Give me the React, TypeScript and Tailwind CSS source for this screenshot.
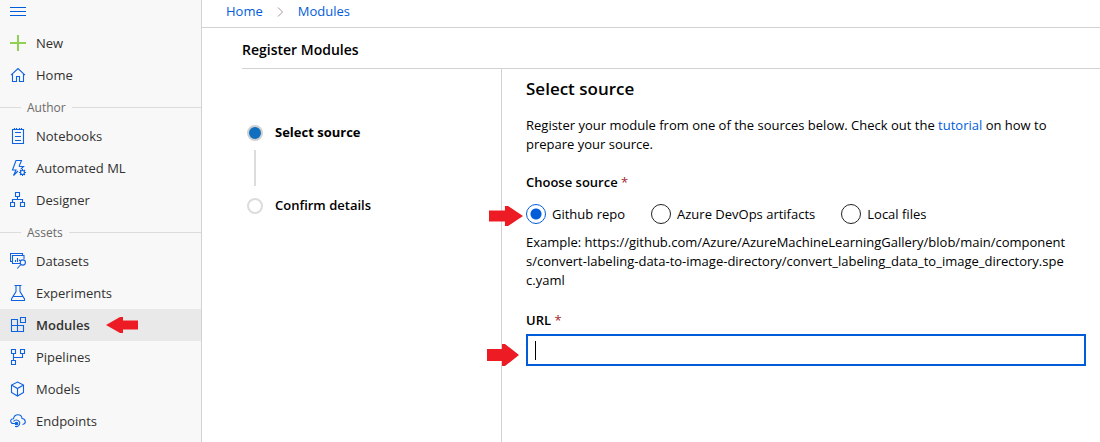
import type { ReactNode } from "react";

type NavItem = { label: string; icon: ReactNode; active?: boolean };

function Icon({ children, color = "#0f62e0" }: { children: ReactNode; color?: string }) {
  return (
    <svg className="size-4 shrink-0" viewBox="0 0 16 16" fill="none" stroke={color} strokeWidth="1.1" aria-hidden="true">
      {children}
    </svg>
  );
}

const topItems: NavItem[] = [
  {
    label: "New",
    icon: (
      <Icon color="#8fd055">
        <path d="M8 0v16M0 8h16" strokeWidth="2" />
      </Icon>
    ),
  },
  {
    label: "Home",
    icon: (
      <Icon>
        <path d="M1 8.200 8 1.500l7 6.700M2.500 7v7.500h4v-5h3v5h4V7" />
      </Icon>
    ),
  },
];

const authorItems: NavItem[] = [
  {
    label: "Notebooks",
    icon: (
      <Icon>
        <path d="M2.500 1.500h11v14h-11zM5 4.500h6M5 8.500h6M5 12.500h6M4.500 0v1.500M6.500 0v1.500M9.500 0v1.500M11.500 0v1.500" />
      </Icon>
    ),
  },
  {
    label: "Automated ML",
    icon: (
      <Icon>
        <path d="M9 6.500 11.500.500H6L2.500 10H6L3.500 15.500 8 11M9 6.500h4.500L11 9" />
        <circle cx="12.500" cy="12.500" r="2" />
        <path d="M12.500 9v1.500M12.500 14.500V16M9 12.500h1.500M14.500 12.500H16M10 10l1.100 1.100M13.900 13.900 15 15M10 15l1.100-1.100M13.900 11.100 15 10" />
      </Icon>
    ),
  },
  {
    label: "Designer",
    icon: (
      <Icon>
        <path d="M5.500.5h4v4h-4zM.5 10.500h4v4h-4zM10.500 10.500h4v4h-4zM7.500 4.500v3M2.500 10.500v-3h10v3" />
      </Icon>
    ),
  },
];

const assetItems: NavItem[] = [
  {
    label: "Datasets",
    icon: (
      <Icon>
        <path d="M2 8.500H.5v-8h12v2M10 10.500H2.500v-8h11.500V6M5.500 9V7M7.500 9V5M9.500 8V6.500" />
        <circle cx="12.800" cy="9.500" r="2.600" />
        <path d="m10.900 11.500-3.600 4" />
      </Icon>
    ),
  },
  {
    label: "Experiments",
    icon: (
      <Icon>
        <path d="M4.500.5h7M6 .5v6L1.500 14v1.500h13V14L10 6.500v-6M3.500 11.500h9" />
      </Icon>
    ),
  },
  {
    label: "Modules",
    active: true,
    icon: (
      <Icon>
        <path d="M1.500 2.500h6v12h-6zM1.500 8.500h12v6h-12M10.500.5h5v5h-5z" />
      </Icon>
    ),
  },
  {
    label: "Pipelines",
    icon: (
      <Icon>
        <path d="M1.500.5h4v4h-4zM10.500.5h4v4h-4zM1.500 11.500h4v4h-4zM3.500 4.500v7M3.500 8.500h9v-4" />
      </Icon>
    ),
  },
  {
    label: "Models",
    icon: (
      <Icon>
        <path d="m7.500 1 6 3v7.500l-6 3.500-6-3.500V4zM1.500 4l6 3.500 6-3.500M7.500 7.500V15" />
      </Icon>
    ),
  },
  {
    label: "Endpoints",
    icon: (
      <Icon>
        <path d="M2.500 10.500C-.5 9 .5 5.500 3.500 5.700 4.500.5 11.500.5 12 5.500c4 .2 4.500 5.500.5 6M3.500 8.500c1.200-2 5-2 6 .5 1 3-2 5-4 4.500" />
        <path d="M1.500 10.500H5M5 13.500h2" />
        <circle cx="6.500" cy="10.500" r="1.300" fill="#0f62e0" />
      </Icon>
    ),
  },
];

function Arrow({ className }: { className: string }) {
  return (
    <svg className={className} viewBox="0 0 32 20" preserveAspectRatio="none" fill="#ed1c24" aria-hidden="true">
      <path d="M0 4.500h15V0h3l14 10-14 10h-3v-4.500H0z" />
    </svg>
  );
}

function NavList({ items }: { items: NavItem[] }) {
  return (
    <ul>
      {items.map((item) => (
        <li key={item.label}>
          <a
            href="#"
            aria-current={item.active ? "page" : undefined}
            className={
              item.active
                ? "flex h-8 items-center gap-[10px] bg-[#e9e9e9] pl-[10px] font-semibold text-[#323130]"
                : "flex h-8 items-center gap-[10px] pl-[10px] text-[#323130]"
            }
          >
            {item.icon}
            {item.label}
            {item.active && <Arrow className="ml-[6px] h-4 w-8 rotate-180" />}
          </a>
        </li>
      ))}
    </ul>
  );
}

function NavHeading({ children }: { children: ReactNode }) {
  return (
    <div className="flex h-[29px] items-center gap-[6px] pt-1 text-xs text-[#6b6a69]">
      <span className="h-px w-[21px] bg-[#dcdcdc]" />
      <h2>{children}</h2>
      <span className="h-px flex-1 bg-[#dcdcdc]" />
    </div>
  );
}

function Source({ label, checked }: { label: string; checked?: boolean }) {
  return (
    <label className="flex items-center gap-[6px]">
      <input
        type="radio"
        name="source"
        defaultChecked={checked}
        className="size-5 appearance-none rounded-full border border-[#222] bg-white checked:border-[#015cda] checked:bg-[radial-gradient(circle,#015cda_5px,transparent_6px)]"
      />
      {label}
    </label>
  );
}

export default function App() {
  return (
    <div className="flex min-h-screen bg-white font-['Open_Sans','Noto_Sans',sans-serif] text-[13px] leading-[19px] text-black">
      <nav aria-label="Workspace" className="w-[202px] shrink-0 border-r border-[#d2d2d2] bg-[#f8f8f8]">
        <button type="button" aria-label="Toggle menu" className="flex h-[27px] items-start pl-[10px] pt-1">
          <Icon color="#015cda">
            <path d="M0 3.500h16M0 7.500h16M0 11.500h16" />
          </Icon>
        </button>
        <NavList items={topItems} />
        <NavHeading>Author</NavHeading>
        <NavList items={authorItems} />
        <NavHeading>Assets</NavHeading>
        <NavList items={assetItems} />
      </nav>

      <main className="flex min-w-0 flex-1 flex-col">
        <nav aria-label="Breadcrumb" className="flex h-7 items-center gap-[14px] border-b border-[#d2d2d2] pb-1 pl-6 text-[#015cda]">
          <a href="#">Home</a>
          <svg className="h-[10px] w-[7px]" viewBox="0 0 7 10" fill="none" stroke="#a09a98" aria-hidden="true">
            <path d="m1 .5 4.500 4.500L1 9.500" />
          </svg>
          <a href="#">Modules</a>
        </nav>

        <div className="flex flex-1 flex-col pl-10">
          <h1 className="flex h-[41px] items-center border-b border-[#d2d2d2] pt-1 text-sm font-semibold">Register Modules</h1>

          <div className="flex flex-1">
            <ol className="w-[259px] shrink-0 pl-[5px] pt-[54px] font-semibold">
              <li className="flex items-center gap-3">
                <span className="size-4 rounded-full border-2 border-[#d0d0d0] bg-[#106ebe]" />
                <span className="font-bold">Select source</span>
              </li>
              <li aria-hidden="true" className="mb-[10px] ml-[7px] mt-2 h-9 w-[2px] bg-[#dcdcdc]" />
              <li className="flex items-center gap-3">
                <span className="size-4 rounded-full border-2 border-[#dcdcdc] bg-white" />
                Confirm details
              </li>
            </ol>

            <form className="min-w-0 flex-1 border-l border-[#d2d2d2] pl-6 pr-[14px] pt-2">
              <h2 className="text-[17px] font-semibold leading-6">Select source</h2>
              <p className="mt-[15px]">
                Register your module from one of the sources below. Check out the{" "}
                <a href="#" className="text-[#015cda]">tutorial</a> on how to prepare your source.
              </p>

              <fieldset className="mt-[19px]">
                <legend className="font-semibold">
                  Choose source <span className="font-normal text-[#a4262c]">*</span>
                </legend>
                <div className="relative mt-3 flex h-5 items-center gap-[26px]">
                  <Arrow className="absolute -left-[37px] top-[2px] h-5 w-[34px]" />
                  <Source label="Github repo" checked />
                  <Source label="Azure DevOps artifacts" />
                  <Source label="Local files" />
                </div>
              </fieldset>
              <p className="mt-[9px] break-all">
                Example: https://github.com/Azure/AzureMachineLearningGallery/blob/main/component
                <br />
                s/convert-labeling-data-to-image-directory/convert_labeling_data_to_image_directory.spe
                <br />
                c.yaml
              </p>

              <label htmlFor="url" className="mt-[21px] block font-semibold">
                URL <span className="font-normal text-[#a4262c]">*</span>
              </label>
              <div className="relative mt-1 flex h-8 items-center border-2 border-[#015cda] pl-[7px]">
                <Arrow className="absolute -left-[41px] top-[8px] h-[22px] w-8" />
                <span className="h-[19px] w-px bg-black" />
                <input id="url" type="text" className="h-full min-w-0 flex-1 bg-transparent caret-transparent outline-none" />
              </div>
            </form>
          </div>
        </div>
      </main>
    </div>
  );
}
